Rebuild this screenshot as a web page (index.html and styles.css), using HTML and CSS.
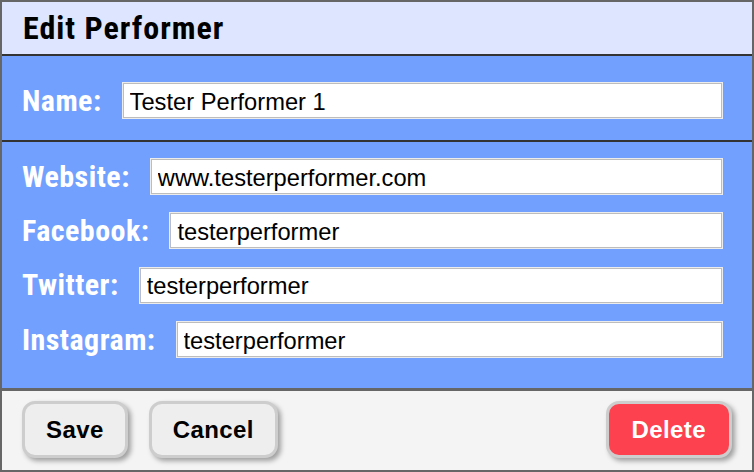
FILE: index.html
```html
<!DOCTYPE html>
<html lang="en">
<head>
<meta charset="utf-8">
<title>Edit Performer</title>
<link rel="stylesheet" href="styles.css">
</head>
<body>
<div class="dialog">
  <header class="dlg-head">
    <h1 class="dlg-title">Edit Performer</h1>
  </header>
  <section class="sec sec-name">
    <div class="row">
      <label class="lbl" for="f-name">Name:</label>
      <input class="fld" id="f-name" type="text" value="Tester Performer 1">
    </div>
  </section>
  <section class="sec sec-links">
    <div class="row">
      <label class="lbl" for="f-web">Website:</label>
      <input class="fld" id="f-web" type="text" value="www.testerperformer.com">
    </div>
    <div class="row">
      <label class="lbl" for="f-fb">Facebook:</label>
      <input class="fld" id="f-fb" type="text" value="testerperformer">
    </div>
    <div class="row">
      <label class="lbl" for="f-tw">Twitter:</label>
      <input class="fld" id="f-tw" type="text" value="testerperformer">
    </div>
    <div class="row">
      <label class="lbl" for="f-ig">Instagram:</label>
      <input class="fld" id="f-ig" type="text" value="testerperformer">
    </div>
  </section>
  <footer class="dlg-foot">
    <button class="btn" type="button">Save</button>
    <button class="btn" type="button">Cancel</button>
    <span class="spacer"></span>
    <button class="btn btn-danger" type="button">Delete</button>
  </footer>
</div>
</body>
</html>
```
FILE: styles.css
```css
html, body {
  margin: 0;
  padding: 0;
}
body {
  width: 754px;
  height: 472px;
  overflow: hidden;
  font-family: "Liberation Sans", Arial, sans-serif;
}
.dialog {
  box-sizing: border-box;
  width: 754px;
  height: 472px;
  border: 2px solid #666666;
  display: flex;
  flex-direction: column;
  background: #72a0fe;
}
.dlg-head {
  height: 54px;
  box-sizing: border-box;
  flex: none;
  background: #dee5fe;
  border-bottom: 2px solid #333333;
  display: flex;
  align-items: center;
  padding-left: 21px;
}
.dlg-title {
  margin: 0;
  font-family: Roboto, "Liberation Sans", sans-serif;
  font-stretch: condensed;
  font-weight: 700;
  font-size: 32px;
  letter-spacing: 1px;
  color: #000;
  line-height: 1;
}
.sec {
  background: #72a0fe;
  padding-left: 20px;
  padding-right: 29px;
}
.sec-name {
  height: 86px;
  box-sizing: border-box;
  flex: none;
  padding-top: 26px;
  border-bottom: 2px solid #333333;
}
.sec-links {
  flex: 1;
  padding-top: 16px;
  display: flex;
  flex-direction: column;
  gap: 17.4px;
}
.row {
  display: flex;
  align-items: center;
  gap: 20px;
  height: 37px;
}
.lbl {
  font-family: Roboto, "Liberation Sans", sans-serif;
  font-stretch: condensed;
  font-weight: 700;
  font-size: 30px;
  letter-spacing: 0.45px;
  color: #ffffff;
  line-height: 1;
  white-space: nowrap;
}
.fld {
  flex: 1;
  min-width: 0;
  box-sizing: border-box;
  height: 35px;
  margin: 1px;
  border: 1px solid #bdbdbd;
  outline: 1px solid #ececec;
  background: #ffffff;
  padding: 3px 6px 0 6px;
  font-family: "Liberation Sans", Arial, sans-serif;
  font-size: 23.7px;
  color: #000;
}
.dlg-foot {
  height: 82px;
  flex: none;
  box-sizing: border-box;
  background: #f4f4f4;
  border-top: 3px solid #666666;
  display: flex;
  align-items: flex-start;
  gap: 21px;
  padding: 10px 20px 0 20px;
}
.spacer {
  flex: 1;
}
.btn {
  box-sizing: border-box;
  height: 57px;
  padding: 0 21px;
  border: 3px solid #cdcdcd;
  border-radius: 13px;
  background: #eeeeee;
  box-shadow: 3px 3px 5px rgba(0, 0, 0, 0.35);
  font-family: "Liberation Sans", Arial, sans-serif;
  font-weight: 700;
  font-size: 24px;
  letter-spacing: 0.4px;
  color: #000;
}
.btn-danger {
  padding: 0 23px;
  background: #fd414f;
  color: #ffffff;
}
```
